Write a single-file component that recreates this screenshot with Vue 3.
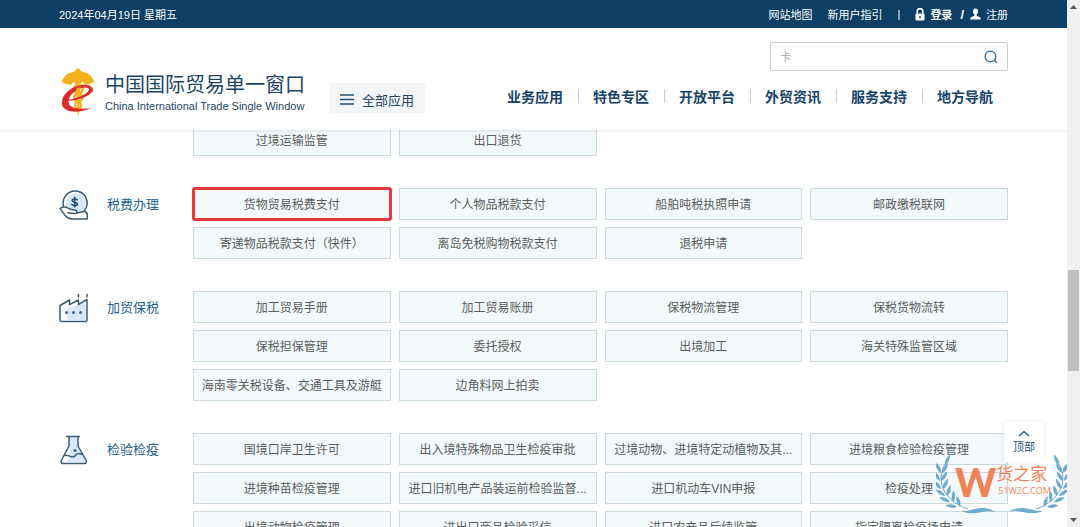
<script setup>
import { ref } from 'vue'

const keyword = ref('')
const nav = ['业务应用', '特色专区', '开放平台', '外贸资讯', '服务支持', '地方导航']
const groups = [
  { title: '', icon: '', items: ['过境运输监管', '出口退货'] },
  {
    title: '税费办理',
    icon: 'tax',
    active: '货物贸易税费支付',
    items: ['货物贸易税费支付', '个人物品税款支付', '船舶吨税执照申请', '邮政缴税联网', '寄递物品税款支付（快件）', '离岛免税购物税款支付', '退税申请'],
  },
  {
    title: '加贸保税',
    icon: 'factory',
    items: ['加工贸易手册', '加工贸易账册', '保税物流管理', '保税货物流转', '保税担保管理', '委托授权', '出境加工', '海关特殊监管区域', '海南零关税设备、交通工具及游艇', '边角料网上拍卖'],
  },
  {
    title: '检验检疫',
    icon: 'flask',
    items: ['国境口岸卫生许可', '出入境特殊物品卫生检疫审批', '过境动物、进境特定动植物及其...', '进境粮食检验检疫管理', '进境种苗检疫管理', '进口旧机电产品装运前检验监督...', '进口机动车VIN申报', '检疫处理', '出境动物检疫管理', '进出口商品检验采信', '进口农产品后续监管', '指定隔离检疫场申请'],
  },
]

// Laurel leaves: base point and direction in degrees, left branch
const leaves = [
  [9, 11, -58], [5, 19, -110], [4, 27, -116], [5, 35, -126], [9, 42, -138], [14, 48, -150], [21, 53, -165],
  [6, 19, -52], [5, 27, -50], [7, 35, -58], [11, 42, -66], [17, 48, -80], [24, 53, -100],
]
</script>

<template>
  <div class="window">
    <div class="page">
      <header class="header">
        <div class="topbar">
          <span>2024年04月19日 星期五</span>
          <div class="topbar-links">
            <a href="#">网站地图</a>
            <a href="#">新用户指引</a>
            <span class="bar">|</span>
            <a href="#" class="login">
              <svg width="10" height="13" viewBox="0 0 10 13"><path d="M2.2 6V3.5a2.8 2.8 0 0 1 5.6 0V6" fill="none" stroke="#fff" stroke-width="1.5" /><rect x="0.5" y="5.5" width="9" height="7" rx="1" fill="#fff" /><path d="M5 8v2.5" stroke="#0d3e66" stroke-width="1.4" /></svg>
              登录
            </a>
            <b class="slash">/</b>
            <a href="#" class="register">
              <svg width="11" height="12" viewBox="0 0 11 12"><path d="M5.5 0.5C3.6 0.5 2.9 2 3 3.5c0.100 1.500 0.700 2.500 1.400 3.100v1.100L1 9.300c-.6.3-.8 1-.8 2.200h10.600c0-1.200-.2-1.900-.8-2.200L6.600 7.700V6.600C7.300 6 7.900 5 8 3.500 8.100 2 7.400.5 5.500.5z" fill="#fff" /></svg>
              注册
            </a>
          </div>
        </div>
        <div class="masthead">
          <a href="#" class="logo">
            <svg class="emblem" width="34" height="48" viewBox="0 0 34 48">
              <path d="M17 0.500c1.400 0 2.400.9 2.600 2.300 1 .9 2.500 1.300 4.400 1.700 4.500 1 7.500 5 10 10l-3-.7.800 1.900-3.200-.8.600 1.800-3.200-1 .3 1.700-3-1.400-1.800-2.500-2.200 2.800h-4.600L12.500 13.500l-1.800 2.500-3 1.400.3-1.700-3.200 1 .6-1.800-3.200.8.800-1.900-3 .7c2.500-5 5.500-9 10-10 1.900-.4 3.400-.8 4.400-1.700C14.600 1.400 15.600.5 17 .5z" fill="#f3b21b" />
              <path d="M15.300 12h3.800L18.300 43l-1 4.500L16.200 43z" fill="#f3b21b" />
              <ellipse cx="17.200" cy="21" rx="4.500" ry="4" fill="none" stroke="#f3b21b" stroke-width="2.400" />
              <ellipse cx="17.200" cy="29.500" rx="4" ry="4" fill="none" stroke="#f3b21b" stroke-width="2.400" />
              <ellipse cx="17.200" cy="37.500" rx="3" ry="3.500" fill="none" stroke="#f3b21b" stroke-width="2.200" />
              <path d="M4 32.500C14 33.500 28 29 31.500 23.500 34 18 25 14.500 15 18.500 5 22 0 30 1 36.500c1.500 8 16 9.500 29.500 3.500-10 1.500-20 1-22.500-4C5.500 29.500 13 22.500 20 20c5-1.300 9-.5 8 2C26 27 14 31 4 32.500z" fill="#dc2b2b" />
              <path d="M15.500 20.500l4-1.500-.3 8.500-3.500 1.500z" fill="#f3b21b" />
            </svg>
            <span class="logo-text">
              <span class="logo-cn">中国国际贸易单一窗口</span>
              <span class="logo-en">China International Trade Single Window</span>
            </span>
          </a>
          <button class="all-apps" type="button">
            <svg width="15" height="11" viewBox="0 0 15 11"><path d="M0 1h14M0 5.500h14M0 10h14" stroke="#1f5076" stroke-width="1.600" /></svg>
            全部应用
          </button>
          <div class="head-right">
            <form class="search" @submit.prevent>
              <input v-model="keyword" type="text" placeholder="卡" aria-label="搜索" />
              <button type="submit" aria-label="搜索">
                <svg width="14" height="14" viewBox="0 0 14 14"><circle cx="6.500" cy="6.500" r="5.400" fill="none" stroke="#2f6a93" stroke-width="1.200" /><path d="M10.300 10.300l2.500 2.500" stroke="#2f6a93" stroke-width="1.300" /></svg>
              </button>
            </form>
            <nav class="nav">
              <a v-for="n in nav" :key="n" href="#">{{ n }}</a>
            </nav>
          </div>
        </div>
      </header>

      <main class="content">
        <section v-for="(g, i) in groups" :key="i" class="group">
          <h2 class="group-title">
            <svg v-if="g.icon === 'tax'" width="30" height="30" viewBox="0 0 30 30" fill="none" stroke="#3c5b74" stroke-width="1.500" stroke-linecap="round" stroke-linejoin="round">
              <circle cx="17" cy="13" r="10" fill="#d8e8ff" stroke="none" />
              <path d="M4.500 16A12 12 0 1 1 25.500 20.500" />
              <path d="M9 22.500c2 .9 4.500 1.200 7.500 1 2-.2 2-3.300-.5-3.500-2.500-.1-4.500-.3-6.500-1.700C7.500 17 5.500 16.700 3.500 17.200L1 18.500c2 2 3.500 6.500 7.500 9 1.500.9 3 1.400 5 1.400h14.800v-4.500c0-1.500-1-2.700-3-3.200l-8 2" fill="#fff" />
              <path d="M18.200 9.800c-.8-1.200-5.200-1.300-5 1 .2 2 5.200.8 5.200 3.200 0 2.200-4.700 2.100-5.600.4M15.700 7.200v9.600" stroke-width="1.600" stroke="#234e72" />
            </svg>
            <svg v-else-if="g.icon === 'factory'" width="30" height="30" viewBox="0 0 30 30" fill="none" stroke="#3c5b74" stroke-width="1.500" stroke-linejoin="round" stroke-linecap="round">
              <path d="M8 15l19-5v17H8z" fill="#d8e8ff" stroke="none" />
              <path d="M1 12.500L10.500 7v4.700L19.500 7v4.700L28 6.500V27a1.500 1.500 0 0 1-1.500 1.500h-24A1.500 1.500 0 0 1 1 27zM19.500 1.500v2.500M28 1.500v2.500" />
              <path d="M7.500 19.500v.1M14.500 19.500v.1M21.500 19.500v.1" stroke-width="3" stroke="#3a628d" />
            </svg>
            <svg v-else-if="g.icon === 'flask'" width="30" height="30" viewBox="0 0 30 30" fill="none" stroke="#3c5b74" stroke-width="1.500" stroke-linejoin="round" stroke-linecap="round">
              <path d="M10 2h9v10l8 15H8l3-5-1-10z" fill="#d8e8ff" stroke="none" />
              <path d="M7.500 1.500h13M10 1.500V11L2.300 25.500c-.7 1.700 0 3 1.700 3h21.500c1.700 0 2.400-1.300 1.700-3L19 11V1.500" />
              <path d="M5.500 20.500c3-1 5 1 7.500 1.500 4 .5 3-3.500 6.500-3.500 2 0 2.500.8 4 .8" />
              <circle cx="16" cy="15.500" r=".8" />
            </svg>
            <span>{{ g.title }}</span>
          </h2>
          <div class="tiles">
            <a v-for="item in g.items" :key="item" href="#" class="tile" :class="{ marked: item === g.active }">{{ item }}</a>
          </div>
        </section>
      </main>

      <button class="to-top" type="button">
        <svg width="12" height="7" viewBox="0 0 12 7"><path d="M1 6l5-4.500L11 6" fill="none" stroke="#1f4f76" stroke-width="1.300" /></svg>
        顶部
      </button>
      <div class="watermark">
        <svg class="laurel" width="132" height="62" viewBox="0 0 132 62">
          <g v-for="side in 2" :key="side" :transform="side === 2 ? 'translate(132 0) scale(-1 1)' : ''">
            <path d="M9 10C0 26 6 46 32 55" fill="none" stroke="#6eabd0" stroke-width="1" />
            <path v-for="(l, k) in leaves" :key="k" d="M0 0C3-2.800 7-2.800 11.500-1.500 8 1.500 3.500 2 0 0z" :transform="`translate(${l[0]} ${l[1]}) rotate(${l[2]})`" fill="#6eabd0" />
            <path d="M25 57C36 58 44 49 60 58 48 55 38 63 25 57z" fill="#6eabd0" />
          </g>
        </svg>
        <span class="mark-w">W</span>
        <span class="mark-text"><span class="mark-cn">货之家</span><span class="mark-en">51W2C.COM</span></span>
      </div>
    </div>

    <div class="scrollbar" aria-hidden="true">
      <svg width="7" height="4" viewBox="0 0 7 4"><path d="M0 4l3.500-4L7 4z" fill="#555" /></svg>
      <div class="track"><div class="thumb"></div></div>
      <svg width="7" height="4" viewBox="0 0 7 4"><path d="M0 0l3.500 4L7 0z" fill="#555" /></svg>
    </div>
  </div>
</template>

<style>
body {
  margin: 0;
  overflow: hidden;
}
</style>

<style scoped>
* {
  box-sizing: border-box;
}
.window {
  display: flex;
  height: 100vh;
  overflow: hidden;
  background: #fff;
  font-family: "Liberation Sans", "Noto Sans CJK SC", sans-serif;
  font-size: 12px;
  color: #5c5c5c;
}
a {
  color: inherit;
  text-decoration: none;
}
button {
  font-family: inherit;
  border: 0;
  cursor: pointer;
}
.page {
  position: relative;
  flex: 1;
  min-width: 0;
  overflow: hidden;
}
.header {
  position: relative;
  z-index: 2;
  background: #fff;
  box-shadow: 0 1px 3px rgba(0, 0, 0, 0.1);
}
.topbar {
  display: flex;
  justify-content: space-between;
  align-items: center;
  height: 28px;
  padding: 0 59px;
  background: #0d3e66;
  color: #fff;
  font-size: 11px;
}
.topbar-links {
  display: flex;
  align-items: center;
  gap: 15px;
}
.login,
.register {
  display: flex;
  align-items: center;
  gap: 5px;
}
.login {
  font-weight: bold;
}
.slash {
  margin: 0 -9px 0 -7px;
  font-size: 13px;
}
.masthead {
  display: flex;
  height: 102px;
  padding: 0 59px;
}
.logo {
  display: flex;
  align-items: center;
  gap: 10px;
  margin-top: 26px;
  color: #1d4467;
}
.emblem {
  margin-left: 2px;
}
.logo-text {
  display: flex;
  flex-direction: column;
  padding-top: 4px;
  white-space: nowrap;
}
.logo-cn {
  font-size: 20px;
  line-height: 24px;
}
.logo-en {
  font-size: 11px;
  line-height: 18px;
}
.all-apps {
  display: flex;
  align-items: center;
  gap: 7px;
  height: 30px;
  margin: 55px 0 0 25px;
  padding: 2px 11px 0 10px;
  border-radius: 2px;
  background: #f4f5f6;
  color: #1d4467;
  font-size: 13px;
  white-space: nowrap;
}
.head-right {
  display: flex;
  flex-direction: column;
  align-items: flex-end;
  margin-left: auto;
}
.search {
  display: flex;
  width: 238px;
  height: 29px;
  margin-top: 14px;
  border: 1px solid #ccc;
  border-radius: 2px;
}
.search input {
  flex: 1;
  min-width: 0;
  padding: 0 9px;
  border: 0;
  outline: 0;
  background: none;
  font-family: inherit;
  font-size: 11px;
}
.search input::placeholder {
  color: #aaa;
}
.search button {
  display: flex;
  align-items: center;
  padding: 0 9px;
  background: none;
}
.nav {
  display: flex;
  margin-top: 18px;
  color: #16446b;
  font-size: 14px;
  font-weight: bold;
}
.nav a {
  display: flex;
  align-items: center;
  width: 86px;
  height: 14px;
  padding-left: 14px;
  border-left: 1px solid #ccc;
  white-space: nowrap;
}
.nav a:first-child {
  border-color: transparent;
}
.content {
  margin-top: -6px;
  padding: 0 59px;
}
.group {
  display: flex;
  align-items: flex-start;
  margin-bottom: 32px;
}
.group-title {
  display: flex;
  flex: none;
  align-items: center;
  gap: 18px;
  width: 134px;
  margin: 2px 0 0;
  color: #22608f;
  font-size: 13px;
  font-weight: normal;
  line-height: 28px;
}
.tiles {
  display: grid;
  flex: 1;
  grid-template-columns: repeat(4, minmax(0, 1fr));
  gap: 7px 8px;
}
.tile {
  height: 32px;
  border: 1px solid #ccd9df;
  background: #f3f8fb;
  line-height: 32px;
  text-align: center;
  white-space: nowrap;
}
.tile.marked {
  outline: 3px solid #e53a35;
  outline-offset: -2px;
  border-radius: 2px;
}
.to-top {
  position: absolute;
  z-index: 3;
  right: 23px;
  bottom: 65px;
  display: flex;
  flex-direction: column;
  align-items: center;
  justify-content: center;
  gap: 3px;
  width: 40px;
  height: 40px;
  padding: 0;
  background: #fff;
  box-shadow: 0 0 6px rgba(0, 0, 0, 0.08);
  color: #1f4f76;
  font-size: 11px;
  line-height: 14px;
}
.watermark {
  position: absolute;
  z-index: 4;
  right: -1px;
  bottom: 11px;
  display: flex;
  width: 132px;
  height: 62px;
  padding: 10px 0 0 19px;
  color: #f08158;
}
.laurel {
  position: absolute;
  left: 0;
  top: 0;
}
.mark-w {
  font-family: Lato, sans-serif;
  font-size: 39px;
  font-weight: 900;
  line-height: 36px;
}
.mark-text {
  display: flex;
  flex-direction: column;
  white-space: nowrap;
}
.mark-cn {
  font-size: 17px;
  line-height: 22px;
}
.mark-en {
  padding-left: 2px;
  font-family: "Open Sans", sans-serif;
  font-size: 9px;
  line-height: 10px;
}
.scrollbar {
  display: flex;
  flex: none;
  flex-direction: column;
  align-items: center;
  width: 13px;
  padding: 5px 0;
  background: #f0f0f0;
}
.track {
  flex: 1;
  width: 11px;
  padding-top: 261px;
}
.thumb {
  height: 101px;
  background: #c1c1c1;
}
</style>
